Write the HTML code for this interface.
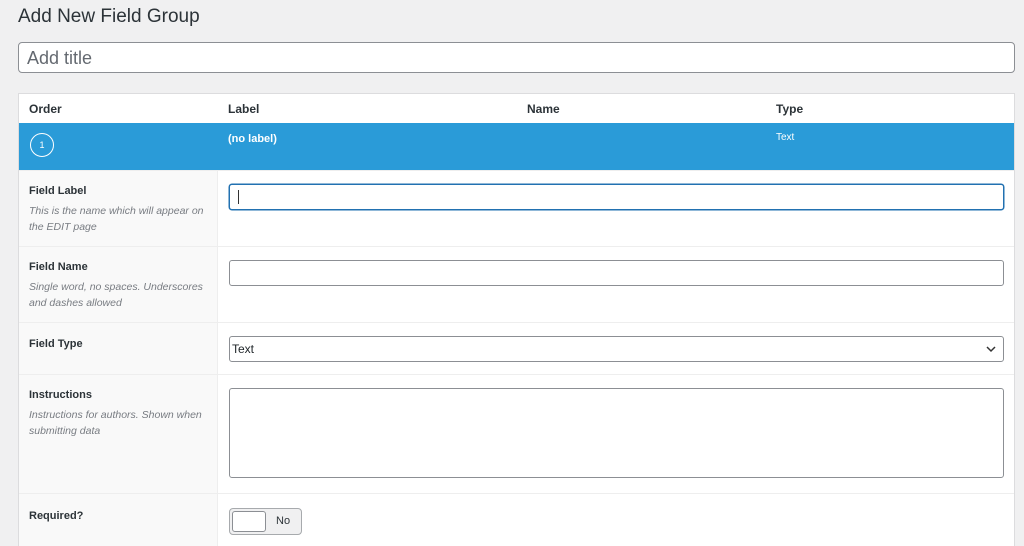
<!DOCTYPE html>
<html><head><style>
*{box-sizing:border-box;margin:0;padding:0}
html,body{width:1024px;height:546px;overflow:hidden}
body{background:#f0f0f1;font-family:"Liberation Sans",sans-serif;color:#1d2327;position:relative}
.a{position:absolute}
h1{position:absolute;left:18px;top:6px;font-size:19px;font-weight:400;color:#2c3338}
.title{left:18px;top:42px;width:997px;height:31px;background:#fff;border:1px solid #8c8f94;border-radius:4px;font-size:18px;color:#646970;padding:5px 8px}
.tbl{left:18px;top:93px;width:997px;height:460px;background:#fff;border:1px solid #dcdcde;overflow:hidden}
.hd{font-size:12px;font-weight:bold;top:8px;color:#2c3338}
.blue{left:0;top:29px;width:995px;height:47px;background:#2a9bd8;color:#fff}
.circ{left:11px;top:10px;width:24px;height:24px;border:1px solid #fff;border-radius:50%;font-size:9px;text-align:center;line-height:22px}
.lc{left:0;width:199px;background:#f9f9f9;border-right:1px solid #eee}
.row{left:0;width:995px;border-top:1px solid #eee}
.lb{position:absolute;left:10px;font-size:11px;font-weight:bold;color:#2c3338}
.ds{position:absolute;left:10px;font-size:10.5px;font-style:italic;color:#787c82;line-height:16px;width:185px}
.in{position:absolute;left:210px;width:775px;background:#fff;border:1px solid #8c8f94;border-radius:3px}
</style></head><body>
<h1>Add New Field Group</h1>
<div class="a title">Add title</div>
<div class="a tbl">
 <div class="a hd" style="left:10px">Order</div>
 <div class="a hd" style="left:209px">Label</div>
 <div class="a hd" style="left:508px">Name</div>
 <div class="a hd" style="left:757px">Type</div>
 <div class="a blue">
  <div class="a circ">1</div>
  <div class="a" style="left:209px;top:10px;font-size:11px;font-weight:bold">(no label)</div>
  <div class="a" style="left:757px;top:9px;font-size:10px">Text</div>
 </div>
 <div class="a lc" style="top:76px;height:400px"></div>
 <div class="a row" style="top:76px;height:76px">
  <div class="lb" style="top:14px">Field Label</div>
  <div class="ds" style="top:32px">This is the name which will appear on the EDIT page</div>
  <div class="in" style="top:13px;height:26px;border-color:#2271b1;box-shadow:0 0 0 0.5px #2271b1"><div style="position:absolute;left:8px;top:5px;width:1px;height:14px;background:#333"></div></div>
 </div>
 <div class="a row" style="top:152px;height:76px">
  <div class="lb" style="top:14px">Field Name</div>
  <div class="ds" style="top:32px">Single word, no spaces. Underscores and dashes allowed</div>
  <div class="in" style="top:13px;height:26px"></div>
 </div>
 <div class="a row" style="top:228px;height:52px">
  <div class="lb" style="top:15px">Field Type</div>
  <div class="in" style="top:13px;height:26px;font-size:12px;padding:5px 2px">Text
   <svg style="position:absolute;right:7px;top:9px" width="10" height="7" viewBox="0 0 10 7"><path d="M1 1l4 4 4-4" fill="none" stroke="#333" stroke-width="1.5"/></svg></div>
 </div>
 <div class="a row" style="top:280px;height:119px">
  <div class="lb" style="top:14px">Instructions</div>
  <div class="ds" style="top:32px">Instructions for authors. Shown when submitting data</div>
  <div class="in" style="top:13px;height:90px"></div>
 </div>
 <div class="a row" style="top:399px;height:60px">
  <div class="lb" style="top:16px">Required?</div>
  <div class="in" style="top:14px;width:73px;height:27px;background:#f0f0f1;border-color:#a7aaad;border-radius:4px">
   <div style="position:absolute;left:2px;top:2px;width:34px;height:21px;background:#fff;border:1px solid #8c8f94;border-radius:3px"></div>
   <div style="position:absolute;left:46px;top:6px;font-size:11px;color:#2c3338">No</div>
  </div>
 </div>
</div>
</body></html>
